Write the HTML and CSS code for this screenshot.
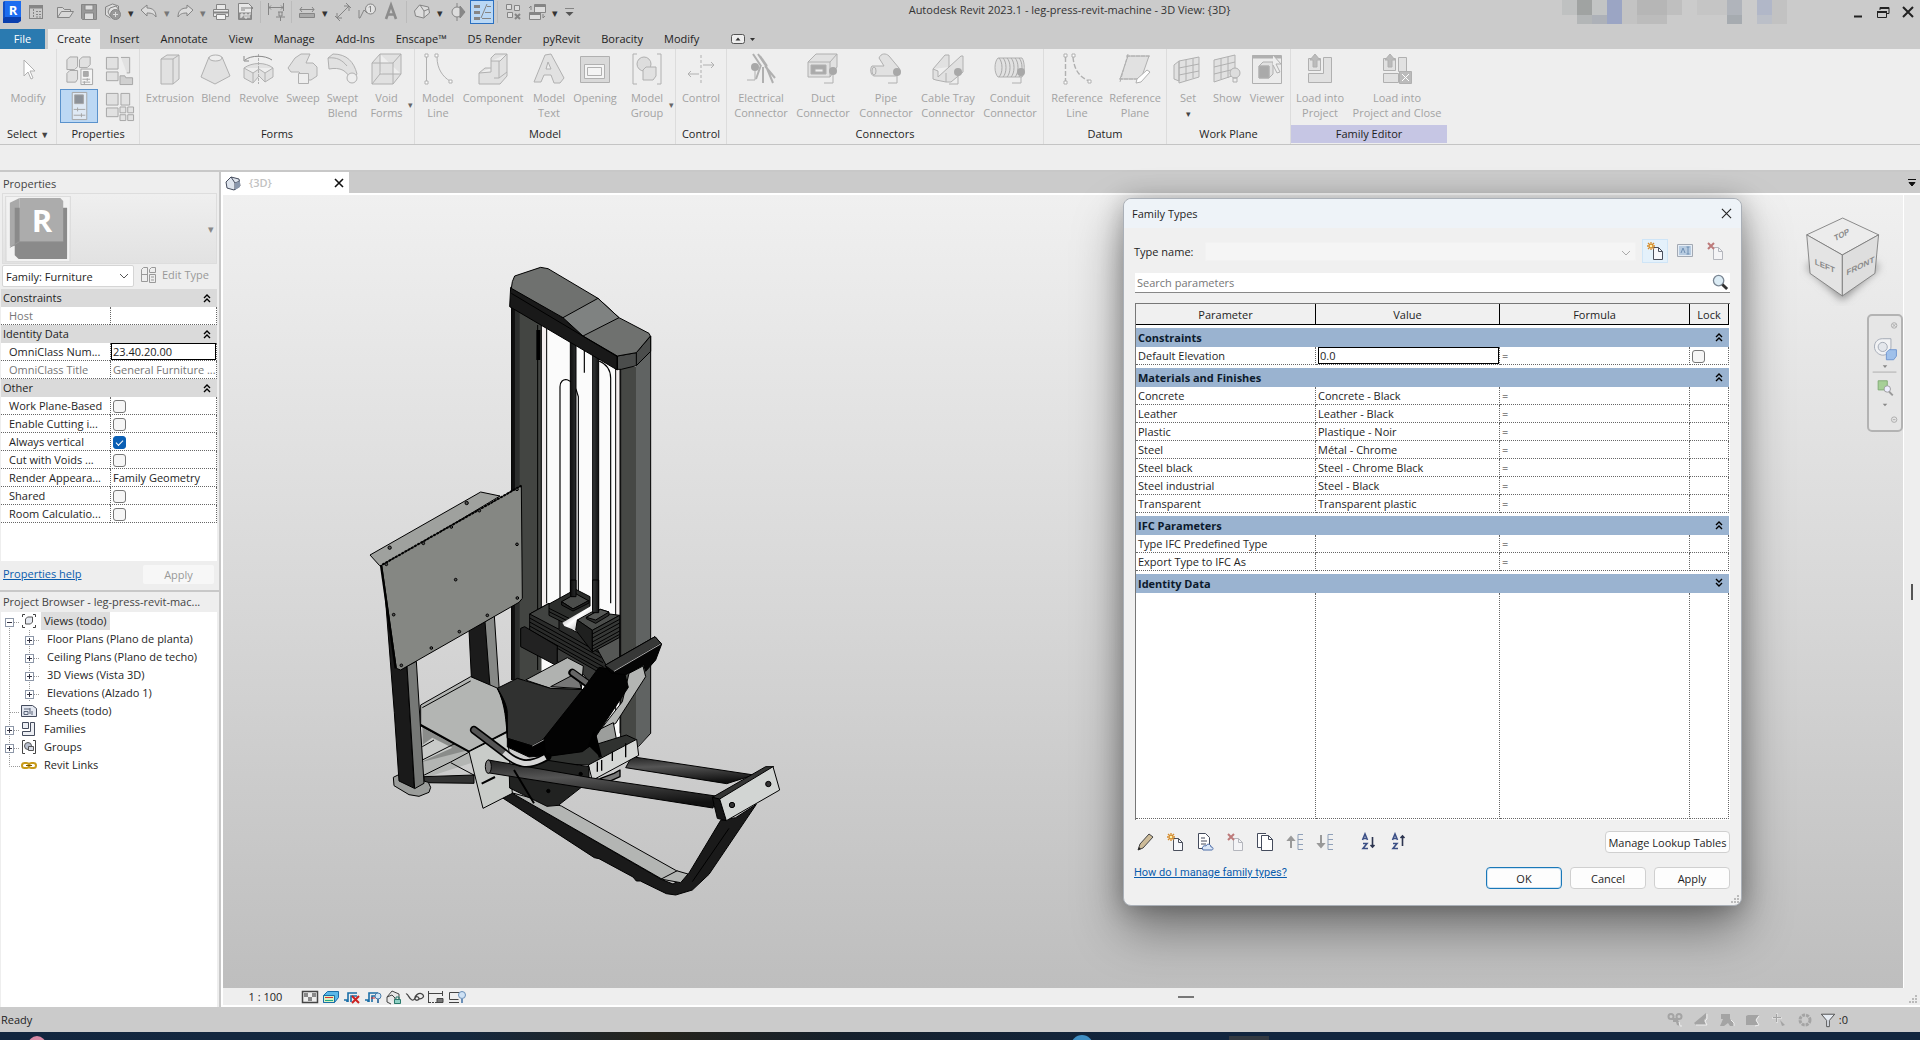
FILE: index.html
```html
<!DOCTYPE html>
<html lang="en">
<head>
<meta charset="utf-8">
<title>Autodesk Revit 2023.1 - leg-press-revit-machine</title>
<link rel="stylesheet" href="styles.css">
</head>
<body>
<svg class="defs" aria-hidden="true">
  <defs>
    <symbol id="t-plus" viewBox="0 0 20 18"><path class="dots" d="M9.500 0v18M14 10.500h6"/><rect x="5.500" y="6.500" width="8" height="8" fill="#fff" stroke="#8d97a8"/><path d="M7 10.500h5M9.500 8v5" stroke="#334"/></symbol>
    <symbol id="t-minus" viewBox="0 0 20 18"><path class="dots" d="M9.500 14v4M14 10.500h6"/><rect x="5.500" y="6.500" width="8" height="8" fill="#fff" stroke="#8d97a8"/><path d="M7 10.500h5" stroke="#334"/></symbol>
    <symbol id="t-tee" viewBox="0 0 20 18"><path class="dots" d="M9.500 0v18M10 10.500h10"/></symbol>
    <symbol id="t-end" viewBox="0 0 20 18"><path class="dots" d="M9.500 0v10.500h10.500"/></symbol>
    <symbol id="t-pass" viewBox="0 0 20 18"><path class="dots" d="M9.500 0v18"/></symbol>
    <symbol id="up" viewBox="0 0 8 10"><path d="M1 5l3-3 3 3M1 9l3-3 3 3" fill="none" stroke="#000" stroke-width="1.400"/></symbol>
    <symbol id="down" viewBox="0 0 8 10"><path d="M1 1l3 3 3-3M1 5l3 3 3-3" fill="none" stroke="#000" stroke-width="1.400"/></symbol>
    <symbol id="newdoc" viewBox="0 0 18 20"><path d="M7.500 6.500h5l4 4v8h-9z" fill="#f6f7fb" stroke="#4a4f5c"/><path d="M12.500 6.500v4h4" fill="none" stroke="#4a4f5c"/><path d="M5 1v8M1 5h8M2 2l6 6M8 2l-6 6" stroke="#d58b2a" stroke-width="1.300"/><circle cx="5" cy="5" r="1.300" fill="#fff3b0"/></symbol>
    <symbol id="deldoc" viewBox="0 0 18 20"><path d="M7.500 6.500h5l4 4v8h-9z" fill="#f4f4f6" stroke="#b4b6bd"/><path d="M12.500 6.500v4h4" fill="none" stroke="#b4b6bd"/><path d="M2 2l6 6M8 2l-6 6" stroke="#bd7a7a" stroke-width="2"/></symbol>
  </defs>
</svg>

<div class="app">
  <header class="titlebar">
    <nav class="qat" aria-label="Quick access">
      <button class="q" aria-label="Revit"><svg viewBox="0 0 24 24"><path d="M3 2l3-1h15v20l-3 2H3z" fill="#0a3fae" stroke="none"/><path d="M5 1h16v16H5z" fill="#1c6cf0" stroke="none"/><path d="M3 2l2-1v16l-2 2z" fill="#1250c4" stroke="none"/><text x="13" y="15" class="logo-r">R</text></svg></button>
      <button class="q" aria-label="Home"><svg viewBox="0 0 24 24"><rect x="5.500" y="5.500" width="13" height="13"/><path d="M5 7h14" stroke-width="3"/><path d="M9.500 9v9M12 11.500h5M12 14.500h5M12 17h5" stroke-dasharray="2 1"/></svg></button>
      <button class="q gap" aria-label="Open"><svg viewBox="0 0 24 24"><path d="M4.500 17.500v-10h5l2 2h6v2M4.500 17.500l4-6h12l-4 6z" fill="#d8d8d8"/></svg></button>
      <button class="q" aria-label="Save"><svg viewBox="0 0 24 24"><path d="M4.500 4.500h15v15h-14l-1-1z" fill="#999"/><path d="M8 5h8v5H8zM7.500 13h9v6.500h-9z" fill="#ddd"/></svg></button>
      <button class="q" aria-label="Sync"><svg viewBox="0 0 24 24"><path d="M4.500 7l7-3 6 2v4M4.500 7v8l5 3" fill="#ddd"/><path d="M7 12l2-4 6-2 3 4-2 6h-7z" fill="#e2e2e2"/><circle cx="14.500" cy="14.500" r="5" fill="#999"/><path d="M12 14.500h5M14.500 12v5" stroke="#ddd"/></svg></button>
      <span class="a">▾</span>
      <button class="q" aria-label="Undo"><svg viewBox="0 0 24 24"><path d="M4 10l6-5v3c6 0 9 3 9 9-2-3-4-4-9-4v3z" fill="#dcdcdc"/></svg></button>
      <span class="a dim">▾</span>
      <button class="q" aria-label="Redo"><svg viewBox="0 0 24 24"><path d="M20 10l-6-5v3c-6 0-9 3-9 9 2-3 4-4 9-4v3z" fill="#dcdcdc"/></svg></button>
      <span class="a dim">▾</span>
      <button class="q" aria-label="Print"><svg viewBox="0 0 24 24"><path d="M7.500 9V4.500h9V9M4.500 9.500h15v7h-15z" fill="#e8e8e8"/><path d="M5 12.500h14" stroke-width="2"/><path d="M7.500 14.500h9v5h-9z" fill="#f2f2f2"/></svg></button>
      <button class="q" aria-label="Export PDF"><svg viewBox="0 0 24 24"><path d="M5.500 3.500h10l3 3v13h-13z" fill="#e8e8e8"/><path d="M8 8h6M8 10h4"/><path d="M6 13h12v6H6z" fill="#999"/><path d="M8 18v-4h2v2H8M12 18v-4h2v4zM16 18v-4h2" stroke="#eee"/><path d="M14 8h6m-2-2l2 2-2 2"/></svg></button>
      <span class="s"></span>
      <button class="q" aria-label="Pin dimension"><svg viewBox="0 0 24 24"><path d="M4.500 3v12M19.500 3v8M5 7.500h14M7 5.500l-2 2 2 2M17 5.500l2 2-2 2M14 12h5M15 12v4h3v-4M12 17h9M16.500 17v4"/></svg></button>
      <span class="s"></span>
      <button class="q" aria-label="Measure"><svg viewBox="0 0 24 24"><path d="M4.500 13.500h15v4h-15z" fill="#aaa"/><path d="M5 9.500h14M7 7L5 9.500 7 12M17 7l2 2.500-2 2.500"/></svg></button>
      <span class="a">▾</span>
      <button class="q" aria-label="Aligned dimension"><svg viewBox="0 0 24 24"><path d="M6 18L18 6M6 13v5h5M13 6h5v5M4 16l5 5M15 3l5 5"/></svg></button>
      <button class="q" aria-label="Tag"><svg viewBox="0 0 24 24"><circle cx="15.500" cy="9" r="5" fill="#e2e2e2"/><path d="M15.500 6v6M14 7.500l1.500-1.500M12 13l-3-3-4 8H4M4 10v8"/></svg></button>
      <button class="q" aria-label="Text"><svg viewBox="0 0 24 24"><path d="M7 19l5-14 5 14M8.500 14.500h7" stroke-width="2.600" stroke="#8c8c8c"/></svg></button>
      <span class="s"></span>
      <button class="q" aria-label="3D view"><svg viewBox="0 0 24 24"><path d="M4.500 11l5-6 9 2 1 6-6 5-8-2z" fill="#ddd"/><path d="M10 5l4 6v7M14 11l5-2" /></svg></button>
      <span class="a">▾</span>
      <button class="q" aria-label="Section"><svg viewBox="0 0 24 24"><circle cx="11" cy="12" r="5" fill="#ddd"/><path d="M11 3v4M11 17v4"/><path d="M14 6l5 6-5 6z" fill="#888"/></svg></button>
      <button class="q on" aria-label="Thin lines"><svg viewBox="0 0 24 24"><path d="M4 6.500h6M4 12.500h6M4 18.500h6" stroke-width="3"/><path d="M11 18L17 4M17 6.500h4M15 12.500h6M12 18.500h9"/></svg></button>
      <span class="s"></span>
      <button class="q" aria-label="Close inactive"><svg viewBox="0 0 24 24"><path d="M5.500 4.500h5v5h-5zM13.500 5.500h5v5h-5zM6.500 12.500h5v5h-5z" fill="#ddd"/><path d="M14 14l5 5M19 14l-5 5" stroke-width="2"/></svg></button>
      <button class="q" aria-label="Switch windows"><svg viewBox="0 0 24 24"><path d="M9.500 4.500h11v8h-11zM4.500 12.500h11v7h-11z" fill="#ddd"/><path d="M10 6h10M5 14h10" stroke-width="2"/><path d="M6 10V6l-2 2M18 14v4l2-2"/></svg></button>
      <span class="a">▾</span>
      <button class="q small" aria-label="Customize"><svg viewBox="0 0 16 24"><path d="M4 8.500h9"/><path d="M4.500 12l4 4 4-4z" fill="#555" stroke="none"/></svg></button>
    </nav>
    <h1 class="app-title">Autodesk Revit 2023.1 - leg-press-revit-machine - 3D View: {3D}</h1>
    <svg class="account" viewBox="0 0 225 24" aria-hidden="true"><g stroke="none">
      <path d="M0 0h15v15H0z" fill="#bfc1c1"/><path d="M15 0h15v15H15z" fill="#a0a3a2"/><path d="M30 0h15v15H30z" fill="#c2c4c4"/><path d="M45 0h15v24H45z" fill="#9ba5c4"/><path d="M60 0h15v24H60z" fill="#c3c3c3"/><path d="M75 0h30v15H75z" fill="#b6b6b6"/><path d="M105 0h15v15h-15z" fill="#bfbfbf"/><path d="M15 15h15v9H15z" fill="#b3b6b7"/><path d="M30 15h15v9H30z" fill="#adb1b8"/><path d="M75 15h30v9H75z" fill="#bcbcbc"/><path d="M135 0h30v15h-30z" fill="#c5c5c5"/><path d="M165 0h15v15h-15z" fill="#b0b4bb"/><path d="M165 15h15v9h-15z" fill="#a6abb0"/><path d="M195 0h15v15h-15z" fill="#b1b7c8"/><path d="M195 15h15v9h-15z" fill="#bbbfc8"/><path d="M210 0h15v24h-15z" fill="#c2c2c2"/></g></svg>
    <div class="winctl">
      <button aria-label="Minimize"><svg viewBox="0 0 24 24"><path d="M8 16.500h8" stroke="#222" stroke-width="2"/></svg></button>
      <button aria-label="Restore"><svg viewBox="0 0 24 24"><path d="M9 10V7.500h9v6h-3M6.500 11.500h9v6h-9z" fill="none" stroke="#222"/><path d="M6 12h10M9 8h9" stroke="#222" stroke-width="2"/></svg></button>
      <button aria-label="Close"><svg viewBox="0 0 24 24"><path d="M7 7l10 10M17 7L7 17" stroke="#222" stroke-width="2"/></svg></button>
    </div>
  </header>

  <nav class="tabs" aria-label="Ribbon tabs">
    <a href="#file" class="file">File</a><a href="#create" class="cur">Create</a><a href="#insert">Insert</a><a href="#annotate">Annotate</a><a href="#view">View</a><a href="#manage">Manage</a><a href="#addins">Add-Ins</a><a href="#enscape">Enscape™</a><a href="#d5">D5 Render</a><a href="#pyrevit">pyRevit</a><a href="#boracity">Boracity</a><a href="#modify">Modify</a>
    <button class="collapse" aria-label="Minimize ribbon"><svg viewBox="0 0 28 12"><rect x="1.500" y="1.500" width="13" height="9" rx="2" fill="#eee" stroke="#555"/><path d="M5.500 7.500l2.500-3 2.500 3zM20 5h5l-2.500 3z" fill="#333"/></svg></button>
  </nav>

  <div class="ribbon">
    <section class="panel p-select">
      <div class="tools"><button class="rb" disabled><svg viewBox="0 0 32 32"><path d="M12 7v16l4-4 3 7 2-1-3-7h5z" fill="#fff"/></svg>Modify</button></div>
      <h2>Select <span class="tri">▼</span></h2>
    </section>
    <section class="panel p-props">
      <div class="quad">
        <button aria-label="Family category"><svg viewBox="0 0 32 32"><path class="f" d="M3 5l3-3h8v10l-3 3H3zM16 5l3-3h8v8l-3 3h-8zM3 19l3-3h8v9l-2 3H3z"/><path d="M17.500 14.500h12v16h-12z" fill="#f4f4f4"/><path d="M20 17h5v5h-5z" fill="#aaa"/><path d="M19 25h8M19 28h8M24 24v3M21 27v3"/></svg></button>
        <button aria-label="Family types"><svg viewBox="0 0 32 32"><path class="f" d="M2.500 2.500h12v12h-12zM17.500 2.500h9v16h-3M2.500 17.500h12v9h-12z"/><path d="M16.500 21.500h5l1 2h7v7h-13z" fill="#d0d0d0"/></svg></button>
        <button class="on" aria-label="Properties"><svg viewBox="0 0 32 32"><path d="M8.500 1.500h15v28h-15z" fill="#dfe9f4"/><path d="M11 4h9v9h-9z" fill="#8d9299"/><path d="M10 19h12M10 25h12M14 17v4M18 23v4"/></svg></button>
        <button aria-label="Family parameters"><svg viewBox="0 0 32 32"><path class="f" d="M2.500 2.500h12v12h-12zM17.500 2.500h9v12h-9zM2.500 17.500h12v9h-12z"/><path d="M16.500 16.500h6v6h-6zM24.500 16.500h6v6h-6zM16.500 24.500h6v6h-6zM24.500 24.500h6v6h-6z" fill="#e2e2e2"/></svg></button>
      </div>
      <h2>Properties</h2>
    </section>
    <section class="panel p-forms">
      <div class="tools">
        <button class="rb" disabled><svg viewBox="0 0 32 32"><path class="f" d="M7 6l6-4h12v24l-6 5H7zM7 6h12v25M19 6l6-4"/></svg>Extrusion</button>
        <button class="rb" disabled><svg viewBox="0 0 32 32"><path class="f" d="M9 4L1 24l14 7 15-8L22 4z"/><ellipse cx="15.500" cy="5" rx="6.500" ry="3" fill="#eee"/></svg>Blend</button>
        <button class="rb" disabled><svg viewBox="0 0 32 32"><path class="f" d="M1 15c8-6 22-6 29 0v9l-8 5-6-6-6 7-9-5zM1 15l9 5 6-4 6 4 8-5M10 20v9M22 20v9"/><path d="M15.500 1v30" stroke-dasharray="3 1"/><path d="M2 7c6-5 20-5 27 0M1 3v5h5" stroke="#888"/></svg>Revolve</button>
        <button class="rb" disabled><svg viewBox="0 0 32 32"><path class="f" d="M8 5l6-4h9l-4 9h7l4 4v9l-6 4h-4l-8-8H4l-3-4z"/><path d="M11.500 20.500h10v10h-10z" fill="#eee"/></svg>Sweep</button>
        <button class="rb" disabled><svg viewBox="0 0 32 32"><path class="f" d="M1 5l5-4c14 0 21 8 24 20l-6 8C21 17 13 14 2 16zM1 5c9-1 14 2 19 8"/><circle cx="25" cy="25" r="5" fill="#eee"/></svg>Swept<br>Blend</button>
        <button class="rb more" disabled><svg viewBox="0 0 32 32"><path class="f" d="M1 10l8-9h21v20l-8 10H1zM1 10h21v21M22 10l8-9M9 1v20h21M9 21l-8 10"/></svg>Void<br>Forms</button>
      </div>
      <h2>Forms</h2>
    </section>
    <section class="panel p-model">
      <div class="tools">
        <button class="rb" disabled><svg viewBox="0 0 32 32"><path d="M4.500 4v24M15 4c0 12 6 20 13 24"/><path d="M3 1h3v3H3zM3 28h3v3H3zM13 1h3v3h-3zM27 27h3v3h-3z" fill="#fff"/></svg>Model<br>Line</button>
        <button class="rb" disabled><svg viewBox="0 0 32 32"><path class="f" d="M2 20l12-1V5l4-4h12v22l-7 8H2zM2 20l6-5h6M22 8v17l-5 0M14 8h9l7-7M22 25l8-6"/></svg>Component</button>
        <button class="rb" disabled><svg viewBox="0 0 32 32"><path class="f" d="M1 29L12 2l6-1 13 24-4 5h-6l-3-8h-7l-3 7zM13 16h5l-3-7z"/></svg>Model<br>Text</button>
        <button class="rb" disabled><svg viewBox="0 0 32 32"><path d="M1.500 3.500h29v26h-29z" fill="#d9d9d9"/><path d="M5.500 11.500h20v14h-20z" fill="#f4f4f4"/><path d="M8.500 14.500h14v8h-14z"/></svg>Opening</button>
        <button class="rb more" disabled><svg viewBox="0 0 32 32"><path d="M6 1H2v30h4M26 1h4v30h-4"/><circle cx="13" cy="11" r="7" fill="#ddd"/><path class="f" d="M12 17l3-3h10v9l-3 4H12z"/></svg>Model<br>Group</button>
      </div>
      <h2>Model</h2>
    </section>
    <section class="panel p-control">
      <div class="tools"><button class="rb" disabled><svg viewBox="0 0 32 32"><path d="M16 2v28" stroke-dasharray="3 2"/><path d="M18 12h11M26 9l3 3-3 3M14 21H3M6 18l-3 3 3 3" /></svg>Control</button></div>
      <h2>Control</h2>
    </section>
    <section class="panel p-conn">
      <div class="tools">
        <button class="rb" disabled><svg viewBox="0 0 32 32"><path d="M8 1l8 12M13 1l8 12M15 3l7 10M21 13l7 17M18 14v16M16 12l-5 14M20 13l10 12" stroke-width="2"/><circle class="n" cx="10" cy="14" r="4"/><path d="M10 18v9H2"/></svg>Electrical<br>Connector</button>
        <button class="rb" disabled><svg viewBox="0 0 32 32"><path class="f" d="M1 9l8-8h21v13l-7 10H1zM1 9h22v15M23 9l7-8"/><path d="M4 12h15v9H4z" fill="#aaa"/><path d="M8 16h8v3H8z" fill="#eee"/><circle class="n" cx="26" cy="18" r="4"/><path d="M26 22v8h-9"/></svg>Duct<br>Connector</button>
        <button class="rb" disabled><svg viewBox="0 0 32 32"><path class="f" d="M2 13h12L9 5c2-5 7-5 10-2l10 12c2 4 0 8-4 8H4c-4-1-4-8-2-10z"/><ellipse cx="4" cy="18" rx="2" ry="4"/><circle class="n" cx="27" cy="19" r="4"/><path d="M27 23v7h-9"/></svg>Pipe<br>Connector</button>
        <button class="rb" disabled><svg viewBox="0 0 32 32"><path class="f" d="M1 16L13 2h4v12L29 3h2v16L19 29h-5L4 27l-3-1zM1 16l5 2v6l11-10M14 20v9"/><circle class="n" cx="26" cy="19" r="4"/><path d="M26 23v8h-9"/></svg>Cable Tray<br>Connector</button>
        <button class="rb" disabled><svg viewBox="0 0 32 32"><path class="f" d="M4 5h24c3 4 3 15 0 19H4C0 20 0 9 4 5z"/><path d="M5 5c4 4 4 15 0 19M9 5c4 4 4 15 0 19M13 5c4 4 4 15 0 19M17 5c4 4 4 15 0 19M21 5c4 4 4 15 0 19M25 5c4 4 4 15 0 19" stroke="#aaa"/><circle class="n" cx="27" cy="19" r="4"/><path d="M27 23v7h-9"/></svg>Conduit<br>Connector</button>
      </div>
      <h2>Connectors</h2>
    </section>
    <section class="panel p-datum">
      <div class="tools">
        <button class="rb" disabled><svg viewBox="0 0 32 32"><path d="M4.500 4v24M12 4c1 12 6 20 16 24" stroke-dasharray="5 2" stroke-width="1.400"/><path d="M3 1h3v3H3zM3 28h3v3H3zM11 1h3v3h-3zM27 27h3v3h-3z" fill="#fff"/></svg>Reference<br>Line</button>
        <button class="rb" disabled><svg viewBox="0 0 32 32"><path class="f" d="M9 3h21l-8 23H1z"/><path d="M7 3h24M0 26h18M9 1L1 29" stroke-dasharray="4 1"/><path d="M18 26L28 17l3 2-9 10-5 1z" fill="#fff"/></svg>Reference<br>Plane</button>
      </div>
      <h2>Datum</h2>
    </section>
    <section class="panel p-plane">
      <div class="tools">
        <button class="rb" disabled><svg viewBox="0 0 32 32"><path class="f" d="M2 12l5-4v20l-5-2zM7 8l20-4v20L7 30zM7 15l20-4M7 22l20-4M14 7v21M21 5v20"/></svg>Set<br><span class="tri">▾</span></button>
        <button class="rb" disabled><svg viewBox="0 0 32 32"><path class="f" d="M3 7l21-5v20L3 29zM3 14l21-5M3 21l21-5M10 5v21M17 4v21"/><circle cx="24" cy="20" r="5" fill="#ddd"/><path d="M22 25h4v4h-4z"/></svg>Show</button>
        <button class="rb" disabled><svg viewBox="0 0 32 32"><path d="M1.500 2.500h29v28h-29z" fill="#ececec"/><path d="M1 4h29" stroke-width="3"/><path class="f" d="M8 13l4-4h10v12l-4 4H8zM8 13h10v12"/><path d="M8 13h10v12H8z" fill="#aaa"/><path d="M22 2l8 9-5 0 4 8-3 1-4-8"  fill="#eee"/></svg>Viewer</button>
      </div>
      <h2>Work Plane</h2>
    </section>
    <section class="panel p-family">
      <div class="tools">
        <button class="rb" disabled><svg viewBox="0 0 32 32"><path class="f" d="M4.500 5.500h12v12h-12zM19.500 4.500h8v25h-23v-9h15z"/><path d="M9 14V7H6l5-6 5 6h-3v7z" fill="#bbb"/></svg>Load into<br>Project</button>
        <button class="rb" disabled><svg viewBox="0 0 32 32"><path class="f" d="M2.500 5.500h12v12h-12zM17.500 4.500h8v14h-8zM2.500 20.500h15v9h-15z"/><path d="M7 14V7H4l5-6 5 6h-3v7z" fill="#bbb"/><path d="M18.500 18.500h12v12h-12z" fill="#bbb"/><path d="M21 21l7 7M28 21l-7 7" stroke="#fff"/></svg>Load into<br>Project and Close</button>
      </div>
      <h2>Family Editor</h2>
    </section>
  </div>
  <div class="options"></div>

  <main class="work">
    <aside class="side">
      <section class="props">
        <h2>Properties</h2>
        <div class="typesel">
          <svg viewBox="0 0 64 66"><path d="M0 0h64v66H0z" fill="#f2f2f2"/><path d="M3 6l10-5v49l-10 1z" fill="#a9a9a9"/><path d="M8 11h54v53H12l-4-4z" fill="#8a8a8a"/><path d="M13 1h42l3 3v42H13z" fill="#acacac"/><path d="M3 52l10-6h45" stroke="#999" fill="none"/><text x="36" y="36" class="big-r">R</text></svg>
          <button aria-label="Change type">▾</button>
        </div>
        <div class="filter">
          <div class="selwrap"><select aria-label="Category"><option>Family: Furniture</option></select><svg viewBox="0 0 10 6"><path d="M1 1l4 4 4-4" fill="none" stroke="#555"/></svg></div>
          <button class="edit" disabled><svg viewBox="0 0 18 18"><path d="M1.500 3.500l2-2h4v14h-6zM9.500 3.500l2-2h4v5h-6zM1.500 8.500h6M9.500 8.500h6v8h-6zM11 11h3M11 14h3" fill="none" stroke="#999"/></svg>Edit Type</button>
        </div>
        <div class="ptable">
          <table>
            <colgroup><col class="pk"><col></colgroup>
            <tbody>
            <tr class="grp"><th colspan="2">Constraints<svg><use href="#up"/></svg></th></tr>
            <tr class="ro"><td>Host</td><td></td></tr>
            <tr class="grp"><th colspan="2">Identity Data<svg><use href="#up"/></svg></th></tr>
            <tr><td><label for="omni">OmniClass Num...</label></td><td class="fld"><input id="omni" type="text" value="23.40.20.00"></td></tr>
            <tr class="ro"><td>OmniClass Title</td><td>General Furniture ...</td></tr>
            <tr class="grp"><th colspan="2">Other<svg><use href="#up"/></svg></th></tr>
            <tr><td><label for="c1">Work Plane-Based</label></td><td><input id="c1" type="checkbox"></td></tr>
            <tr><td><label for="c2">Enable Cutting i...</label></td><td><input id="c2" type="checkbox"></td></tr>
            <tr><td><label for="c3">Always vertical</label></td><td><input id="c3" type="checkbox" checked></td></tr>
            <tr><td><label for="c4">Cut with Voids ...</label></td><td><input id="c4" type="checkbox"></td></tr>
            <tr><td>Render Appeara...</td><td>Family Geometry</td></tr>
            <tr><td><label for="c5">Shared</label></td><td><input id="c5" type="checkbox"></td></tr>
            <tr><td><label for="c6">Room Calculatio...</label></td><td><input id="c6" type="checkbox"></td></tr>
            </tbody>
          </table>
        </div>
        <div class="pfoot"><a href="#help">Properties help</a><button disabled>Apply</button></div>
      </section>
      <section class="browser">
        <h2>Project Browser - leg-press-revit-mac...</h2>
        <ul class="tree">
          <li><svg><use href="#t-minus"/></svg><svg class="ic" viewBox="0 0 16 16"><path d="M4 1.500H1.500V4M12 1.500h2.500V4M4 14.500H1.500V12M12 14.500h2.500V12" fill="none" stroke="#444"/><path d="M4.500 6l2-2h5v5l-2 2h-5z" fill="#e8ebf2" stroke="#555"/></svg><span class="sel">Views (todo)</span></li>
          <li><svg><use href="#t-pass"/></svg><svg><use href="#t-plus"/></svg><span class="kid">Floor Plans (Plano de planta)</span></li>
          <li><svg><use href="#t-pass"/></svg><svg><use href="#t-plus"/></svg><span class="kid">Ceiling Plans (Plano de techo)</span></li>
          <li><svg><use href="#t-pass"/></svg><svg><use href="#t-plus"/></svg><span class="kid">3D Views (Vista 3D)</span></li>
          <li><svg><use href="#t-pass"/></svg><svg><use href="#t-plus"/></svg><span class="kid">Elevations (Alzado 1)</span></li>
          <li><svg><use href="#t-tee"/></svg><svg class="ic" viewBox="0 0 16 16"><path d="M.5 2.500h11l4 3v8H.5z" fill="#e3e7f0" stroke="#444b5c"/><path d="M3 6h6M3 8.500h4v3H3zM9 5v6M11 8v4" fill="none" stroke="#5a6478"/></svg><span>Sheets (todo)</span></li>
          <li><svg><use href="#t-plus"/></svg><svg class="ic" viewBox="0 0 16 16"><path d="M1.500 1.500h6v6h-6zM9.500 1.500h4v13h-12v-4h8z" fill="#eceef3" stroke="#444b5c"/></svg><span>Families</span></li>
          <li><svg><use href="#t-plus"/></svg><svg class="ic" viewBox="0 0 16 16"><path d="M4 1.500H1.500v13H4M12 1.500h2.500v13H12" fill="none" stroke="#444"/><circle cx="7" cy="7" r="3.500" fill="#b9c0cf" stroke="#555"/><path d="M7.500 7.500h5v4h-5z" fill="#d8dce6" stroke="#555"/></svg><span>Groups</span></li>
          <li><svg><use href="#t-end"/></svg><svg class="ic" viewBox="0 0 16 16"><rect x="1" y="6" width="7" height="5" rx="2.500" fill="none" stroke="#c89a18" stroke-width="2"/><rect x="8" y="6" width="7" height="5" rx="2.500" fill="none" stroke="#c89a18" stroke-width="2"/><path d="M5 8.500h6" stroke="#7a5a08"/></svg><span>Revit Links</span></li>
        </ul>
      </section>
    </aside>

    <section class="view">
      <div class="viewtabs">
        <div class="vtab"><svg viewBox="0 0 16 16"><path d="M1 7l5-5 8 2 1 7-6 4-7-2z" fill="#dfe5ee" stroke="#444b5c"/><path d="M1 7l5-5 4 6v7M10 8l5-2" fill="none" stroke="#444b5c"/><path d="M10 8l5-2v6l-5 3z" fill="#8a97ac"/></svg><span>{3D}</span><button aria-label="Close view"><svg viewBox="0 0 12 12"><path d="M2 2l8 8M10 2l-8 8" stroke="#111" stroke-width="1.600"/></svg></button></div>
        <button class="vmore" aria-label="Tab list"><svg viewBox="0 0 10 10"><path d="M1 1.500h8M2 4.500l3 3.500 3-3.500z" stroke="#111" fill="#111"/></svg></button>
      </div>
      <div class="viewbody">
        <div class="canvas">
          <svg class="machine" viewBox="0 0 1320 1980" role="img" aria-label="Leg press machine">
            <defs>
              <linearGradient id="tube" x1="0" y1="0" x2="0.150" y2="1"><stop offset="0" stop-color="#222"/><stop offset=".4" stop-color="#555"/><stop offset="1" stop-color="#111"/></linearGradient>
              <linearGradient id="chrome" x1="0" y1="0" x2="1" y2="1"><stop offset="0" stop-color="#777"/><stop offset=".5" stop-color="#fff"/><stop offset="1" stop-color="#888"/></linearGradient>
              <linearGradient id="rod"><stop offset="0" stop-color="#111"/><stop offset=".6" stop-color="#5a6062"/><stop offset="1" stop-color="#111"/></linearGradient>
            </defs>
            <g stroke="#000" stroke-width="3" stroke-linejoin="round">
              <path d="M457 170L548 220V1290H457z" fill="#434542" stroke="none"/>
              <path d="M457 175h11V1290h-11z" fill="#101010" stroke="none"/><path d="M468 175h14V1290h-14z" fill="#2c2e2d" stroke="none"/>
              <path d="M548 222L790 358V1470H548z" fill="#fbfbfb" stroke="none"/>
              <path d="M548 225h16V1100h-16zM770 350h15V1200h-15z" fill="#f3eeee" stroke="none"/>
              <path d="M458 172V1290M536 225V1260M547 225V1100M563 235V1060M770 350V1420M783 355V1450" fill="none"/>
              <path d="M538 240v90" stroke-width="12"/>
              <path d="M603 410V1060M603 410C603 380 642 375 658 440V1080M755 385V1060M755 385C755 360 742 342 720 333M676 300v68" fill="none" stroke-width="3.500"/>
              <path d="M634 270h17V1050h-17zM701 310h18V1080h-18z" fill="url(#rod)"/>
              <path d="M785 350h46V1480h-46z" fill="#464845" stroke="none"/>
              <path d="M831 340l44-42V1450l-37 38h-7z" fill="#606362" stroke="none"/>
              <path d="M785 355V1470M875 258V1450l-37 40" fill="none"/>
              <path d="M455 112L612 203l60 55 103 60v42L452 170z" fill="#191919"/>
              <path d="M775 318l57-10 43-50v46l-43 43-45 11h-12z" fill="#4b4d4c"/>
              <path d="M467 78l78-26 22 4 150 89 63 58 90 47 4 8-42 50-57 10-103-60-60-55-155-88 3-20z" fill="#6f716f"/>
              <path d="M612 203l105-58 63 58-108 55z" fill="#7f8281"/>
              <path d="M775 318v40M457 130l318 190M832 308v38" fill="none"/>
              <path d="M33 915L365 726l58 12L75 947H62z" fill="#9fa19e"/>
            </g>
            <g transform="translate(0 990)" stroke="#000" stroke-width="3" stroke-linejoin="round">
              <path d="M330 150l50-25 15 200-58-35z" fill="#1b1b1b"/><path d="M378 125l28-17 15 225-28-13z" fill="#868886"/>
              <path d="M190 545l130-70 60 60-185 60z" fill="#b3b5b3" stroke="none"/><path d="M190 440l140 70-138 35z" fill="#8a8c8a" stroke="none"/>
              <path d="M190 495l30-22 60 30-88 40z" fill="#c9cbc9" stroke="none"/>
              <path d="M195 590l150-5v25l-150-2z" fill="#333"/><path d="M190 500l35-20M190 540l95-48M275 548l75 40M190 588l85-42 60-32" fill="none"/>
              <path d="M103 592l20-10 85 25 7 15-5 15-30 12-30-5-45-27z" fill="#9b9d9b"/>
              <path d="M75 0l37 265 32-5 22 365-46-22-14-205z" fill="#1a1a1a"/><path d="M144 258l28-14 23 366-28 16z" fill="#767876"/>
              <path d="M185 375l150-85 105 45 5 120-115 60-145-78z" fill="#b3b5b3"/><path d="M185 435l145 80 115-60" fill="none" stroke-width="6"/><path d="M190 383l145-80" fill="none"/>
              <path d="M425 650l32-12 450 260 35 14 45-28 98-163 45-8 62-40-142 210-50 47-50 15-28-4-78-38-12 0-10-12-102-55-14-3z" fill="#1a1a1a"/>
              <path d="M457 638l150 40 345 194 35 10-22 26-55-10z" fill="#b3b5b3"/><path d="M905 898l50-26M1000 905l110-160" fill="none"/>
              <path d="M818 530l367 55-82 26-303-48z" fill="url(#tube)"/>
              <path d="M700 215l82-45v70l-42 26z" fill="#555755"/>
              <path d="M512 102l58-32 48 24 22 56 60 30 45 82-28 20-205-122z" fill="#2a2b2a"/>
              <path d="M512 102l58-32 30 16v62z" fill="#414341"/>
              <path d="M512 114l215 119M512 126l220 122M512 138l222 123M512 150l215 120M600 150l120 68" fill="none"/>
              <path d="M570 72l80-44 43 22v30l-58 38-17 12-48-24z" fill="#2c2e2c"/><path d="M570 85l60 30M570 95l60 30" fill="none"/>
              <path d="M608 65l42-24 40 22-48 24z" fill="#4b4d4b"/><path d="M608 65v10l34 18 48-24v-8l-48 26z" fill="#1f201f"/>
              <path d="M610 128l86-50v25l-30 20-20 27-30-12z" fill="url(#chrome)" stroke="none"/>
              <path d="M655 120l45-25 82 11-82 45z" fill="#4b4d4b"/><path d="M655 120l45 31v64l-50-65z" fill="#1f201f"/>
              <path d="M700 151l82-45v66l-82 44z" fill="#363836"/><path d="M700 162l82-44M700 174l82-45M700 186l82-45M700 198l82-45M700 208l82-45" fill="none"/>
              <path d="M682 112l42-24 26 8v10l-40 24-28-14z" fill="#2d2e2d"/><path d="M682 112l42-24 26 8-40 24z" fill="#565856"/>
              <path d="M635 0h16v50h-16zM701 0h18v98h-18z" fill="url(#rod)"/>
              <path d="M485 145l12-5 98 58v60l-110-58z" fill="#222"/>
              <path d="M595 205l130 75-20 50-30-45-80-40z" fill="#3a3b3a"/>
              <path d="M500 300l125-67 48 25-6 70-90-2z" fill="#b0b2b0"/><path d="M575 320l80-42 12 48z" fill="#777"/>
              <path d="M640 278l50 36" stroke-width="24" stroke-linecap="round"/><path d="M642 278l46 33" stroke="#666" stroke-width="15" stroke-linecap="round"/>
              <path d="M720 455l70-90 20-85 42-22 8 32-90 140z" fill="#b3b5b3"/><path d="M708 455l55-27 14 75-54 28z" fill="#9c9e9c"/>
              <path d="M560 530l130-30 112-35 32 15-144 75-130-5z" fill="#303230"/><path d="M688 555l145-77 6 48-139 75z" fill="#d5d7d5"/><path d="M765 580l18-10v20l-40 18-20-12zM760 515v28M800 490v42M728 540v32M715 545v30" fill="#777" stroke-width="4"/>
              <path d="M330 515l115-58 15 183-88 45z" fill="#c9ccc9"/>
              <path d="M450 555l110-15 130 20v44l-92 72-34 3-112-55z" fill="#212221"/>
              <path d="M388 540l312 54 370 54-8 36-372-58-305-48z" fill="url(#tube)"/><path d="M368 611l40-20M465 570l60 100" fill="none" stroke-width="6"/>
              <ellipse cx="388" cy="560" rx="9" ry="20" fill="#777"/>
              <path d="M415 325l60-30 100 30 98 4-108 142-45 27-75-23c-4-50-5-100-30-150z" fill="#303130"/>
              <path d="M415 325c25 45 28 90 30 150l75 23 45-27 10 55-65 5-65-30v-100c0-20-10-45-30-76z" fill="#000"/><path d="M520 498l45-24" stroke="#999"/>
              <path d="M670 330l50-68 75 10 13 50-118 178-20 15-110 15-5-55z" fill="#030303"/><path d="M692 500l14-40 18 72" fill="#000" stroke-width="10"/>
              <path d="M738 256l150-86 20 22-18 48-30 34-6-20-54 30-44-5z" fill="#050505"/><path d="M738 256l150-86 18 20-142 85z" fill="#373837"/><path d="M765 274l140-82" stroke="#aaa"/>
              <path d="M345 450l90 68c40 35 70 45 130 12" fill="none" stroke-width="25" stroke-linecap="round"/><path d="M345 450l90 68" stroke="#555" stroke-width="15" stroke-linecap="round"/><path d="M435 518c40 35 70 45 124 14" fill="none" stroke="#d5d5d5" stroke-width="15"/>
              <path d="M1060 652l160-92h24l-162 100z" fill="#343534"/><path d="M1060 652l22 5 20 65-27-7z" fill="#151515"/><path d="M1082 657l160-97 20 70-160 92z" fill="#d2d5d3"/>
              <circle cx="1119" cy="675" r="8" fill="#333"/><circle cx="1228" cy="612" r="8" fill="#333"/><circle cx="568" cy="633" r="5"/><circle cx="665" cy="582" r="5"/>
            </g>
            <g stroke="#000" stroke-width="3" stroke-linejoin="round">
              <path d="M68 945L487 707l3 338-10 12-355 203-13-5z" fill="#858783"/><path d="M66 945l44 310" stroke-width="7"/><path d="M70 944L487 707" stroke-dasharray="8 3" stroke-width="6"/>
              <g fill="#555"><circle cx="82" cy="943" r="4"/><circle cx="193" cy="880" r="4"/><circle cx="277" cy="831" r="4"/><circle cx="361" cy="782" r="4"/><circle cx="474" cy="718" r="4"/><circle cx="474" cy="883" r="4"/><circle cx="290" cy="989" r="4"/><circle cx="475" cy="1044" r="4"/><circle cx="385" cy="1096" r="4"/><circle cx="301" cy="1145" r="4"/><circle cx="217" cy="1194" r="4"/><circle cx="127" cy="1246" r="4"/><circle cx="104" cy="1094" r="4"/><circle cx="92" cy="893" r="5"/><circle cx="323" cy="759" r="5"/></g>
            </g>
          </svg>
          <svg class="cube" viewBox="180 100 260 280" role="img" aria-label="View cube">
            <defs><filter id="soft"><feGaussianBlur stdDeviation="12"/></filter></defs>
            <path d="M200 260l108-60 112 60-112 100z" fill="#8c8c8c" filter="url(#soft)"/>
            <g stroke="#777" stroke-width="2.500"><path d="M202 165l107-50 107 50-108 60z" fill="#ececec"/><path d="M202 165l106 60v122l-96-67z" fill="#e4e4e4"/><path d="M416 165l-108 60v122l97-67z" fill="#dedede"/></g>
            <text class="face" transform="translate(306 164) rotate(-27) skewX(-15)" x="0" y="9">TOP</text>
            <text class="face" transform="translate(256 257) skewY(24)" x="0" y="9">LEFT</text>
            <text class="face" transform="translate(362 257) skewY(-26)" x="0" y="9">FRONT</text>
          </svg>
          <div class="navbar">
            <svg viewBox="0 0 35 117"><g fill="none" stroke="#aaa"><circle cx="27.500" cy="6.500" r="3"/><path d="M26 5l3 3M29 5l-3 3M4 57.500h26"/><circle cx="27.500" cy="109.500" r="3"/><path d="M26 109.500h3"/></g><path d="M6 30c0-6 4-9 9-9h9v9c0 6-5 9-9 9s-9-4-9-9z" fill="#f1f2f4" stroke="#a0a6b2"/><circle cx="15" cy="30" r="5" fill="#e4e7ec" stroke="#a0a6b2"/><path d="M19 36l3-3h8v7l-3 4h-8z" fill="#9fc0ea" stroke="#6d94cf"/><path d="M15 50h5l-2.500 3zM15 92h5l-2.500 3z" fill="#888"/><path d="M10 67h10v10H10z" fill="#a6cf97" stroke="#7fa873"/><circle cx="20" cy="76" r="3.500" fill="#eef" stroke="#999"/><path d="M22 79l4 4" stroke="#999" stroke-width="2"/></svg>
          </div>
        </div>
        <div class="vgrip"></div>
      </div>
      <div class="viewctl">
        <button class="scale">1 : 100</button>
        <button aria-label="Detail level"><svg viewBox="0 0 20 16"><path d="M2.500 2.500h15v11h-15z" fill="#eee" stroke="#444" stroke-width="1.500"/><path d="M4 4h4v4H4zM12 4h4v4h-4zM8 8h4v4H8z" fill="#888"/></svg></button>
        <button aria-label="Visual style"><svg viewBox="0 0 20 16"><path d="M2.500 6.500l4-4h11v6l-4 5h-11z" fill="#5bb8e8" stroke="#1b6fa8"/><path d="M2.500 6.500h11v7h-11z" fill="#d9f2c0" stroke="#1b6fa8"/><path d="M4 8.500h8" stroke="#d33"/><path d="M4 11.500h8" stroke="#2a8"/></svg></button>
        <button aria-label="Crop view off"><svg viewBox="0 0 20 16"><path d="M2 11h3v2M6 13V4h9M9 13V7h6" fill="none" stroke="#1b6fa8" stroke-width="1.600"/><path d="M10 7l7 7M17 7l-7 7" stroke="#c22" stroke-width="2"/></svg></button>
        <button aria-label="Show crop region"><svg viewBox="0 0 20 16"><path d="M2 11h3v2M6 13V4h9M9 13V7h4" fill="none" stroke="#1b6fa8" stroke-width="1.600"/><path d="M8 9h4" stroke="#c22"/><circle cx="15" cy="7" r="3" fill="#cfe6f7" stroke="#4a7ba8"/><path d="M15 10v4" stroke="#4a7ba8" stroke-width="2"/></svg></button>
        <button aria-label="Lock 3D view"><svg viewBox="0 0 20 16"><path d="M3 8l5-6 7 3v5M3 8v5l4 2M3 8l5-2 3 3v6" fill="#e6e6e6" stroke="#444"/><path d="M10.500 10.500h6v4h-6z" fill="#8fd0c4" stroke="#2b7a6d"/><path d="M12 10V8h3v2" fill="none" stroke="#2b7a6d"/></svg></button>
        <button aria-label="Temporary hide"><svg viewBox="0 0 20 16"><path d="M1 5c2-1 3 5 6 6s3-5 6-3-2 5-3 2 4-7 7-5 1 5-3 5" fill="none" stroke="#444" stroke-width="1.300"/></svg></button>
        <button aria-label="Reveal constraints"><svg viewBox="0 0 20 16"><path d="M2.500 2v12M3 4.500h13M16.500 2v5" fill="none" stroke="#444"/><path d="M3 13.500h8" stroke="#444" stroke-dasharray="2 1"/><path d="M11 9.500h6v4h-6z" fill="#777" stroke="#444"/></svg></button>
        <button aria-label="Worksharing display"><svg viewBox="0 0 20 16"><path d="M2.500 3.500h10M2.500 3.500v7h9M2 13.500h10" fill="none" stroke="#444"/><circle cx="15" cy="6" r="3.500" fill="#cfe2f5" stroke="#6a8fb8"/><path d="M15 10v4" stroke="#6a8fb8" stroke-width="2"/></svg></button>
        <span class="hgrip"></span>
        <svg class="sizer" viewBox="0 0 9 9"><path d="M6 0h2v2H6zM3 3h2v2H3zM6 3h2v2H6zM0 6h2v2H0zM3 6h2v2H3zM6 6h2v2H6z" fill="#bbb"/></svg>
      </div>

      <form class="dialog" role="dialog" aria-labelledby="dt">
        <div class="dhead"><h2 id="dt">Family Types</h2><button type="button" aria-label="Close dialog"><svg viewBox="0 0 12 12"><path d="M1 1l10 10M11 1L1 11" stroke="#222" stroke-width="1.200"/></svg></button></div>
        <div class="dtype">
          <label for="tn">Type name:</label>
          <div class="selwrap"><select id="tn" disabled><option></option></select><svg viewBox="0 0 10 6"><path d="M1 1l4 4 4-4" fill="none" stroke="#aaa"/></svg></div>
          <button type="button" class="on" aria-label="New type"><svg viewBox="0 0 18 20"><use href="#newdoc"/></svg></button>
          <button type="button" aria-label="Rename type"><svg viewBox="0 0 18 20"><path d="M1.500 3.500h15v12h-15z" fill="#e6edf5" stroke="#a3a9b3"/><path d="M3 5h12v9H3z" fill="#b7cbe0"/><path d="M5 12l2-5 2 5M12 6v7M10.500 6h3M10.500 13h3" fill="none" stroke="#6f8fb3"/></svg></button>
          <button type="button" aria-label="Delete type"><svg viewBox="0 0 18 20"><use href="#deldoc"/></svg></button>
        </div>
        <div class="dsearch"><input type="text" aria-label="Search parameters" placeholder="Search parameters"><svg viewBox="0 0 18 18"><circle cx="7" cy="7" r="5.500" fill="#dcecf5" stroke="#7b8794" stroke-width="1.400"/><path d="M11 11l5 5" stroke="#333" stroke-width="3"/></svg></div>
        <div class="dtable">
          <table>
            <colgroup><col class="c1"><col class="c2"><col class="c3"><col class="c4"></colgroup>
            <thead><tr><th>Parameter</th><th>Value</th><th>Formula</th><th>Lock</th></tr></thead>
            <tbody>
            <tr class="grp"><th colspan="4">Constraints<svg><use href="#up"/></svg></th></tr>
            <tr><td><label for="de">Default Elevation</label></td><td class="fld"><input id="de" type="text" value="0.0"></td><td>=</td><td><input type="checkbox" aria-label="Lock Default Elevation"></td></tr>
            <tr class="grp"><th colspan="4">Materials and Finishes<svg><use href="#up"/></svg></th></tr>
            <tr><td>Concrete</td><td>Concrete - Black</td><td>=</td><td></td></tr>
            <tr><td>Leather</td><td>Leather - Black</td><td>=</td><td></td></tr>
            <tr><td>Plastic</td><td>Plastique - Noir</td><td>=</td><td></td></tr>
            <tr><td>Steel</td><td>Métal - Chrome</td><td>=</td><td></td></tr>
            <tr><td>Steel black</td><td>Steel - Chrome Black</td><td>=</td><td></td></tr>
            <tr><td>Steel industrial</td><td>Steel - Black</td><td>=</td><td></td></tr>
            <tr><td>Transparent</td><td>Transparent plastic</td><td>=</td><td></td></tr>
            <tr class="grp"><th colspan="4">IFC Parameters<svg><use href="#up"/></svg></th></tr>
            <tr><td>Type IFC Predefined Type</td><td></td><td>=</td><td></td></tr>
            <tr><td>Export Type to IFC As</td><td></td><td>=</td><td></td></tr>
            <tr class="grp"><th colspan="4">Identity Data<svg><use href="#down"/></svg></th></tr>
            <tr class="fill"><td></td><td></td><td></td><td></td></tr>
            </tbody>
          </table>
        </div>
        <div class="dtools">
          <button type="button" aria-label="Edit parameter"><svg viewBox="0 0 18 20"><path d="M2 18l2-6L13 2l4 3-10 11z" fill="#cdbb98" stroke="#444"/><path d="M2 18l1-3 2 2z" fill="#222"/></svg></button>
          <button type="button" aria-label="New parameter"><svg viewBox="0 0 18 20"><use href="#newdoc"/></svg></button>
          <button type="button" aria-label="Shared parameter"><svg viewBox="0 0 18 20"><path d="M2.500 1.500h7l4 4v11h-11z" fill="#fff" stroke="#444b5c"/><path d="M5 6h4M5 9h6M5 12h5" stroke="#444b5c"/><path d="M7 18c-2-3 1-5 3-4 1-3 5-2 5 1 3 0 2 3 1 3z" fill="#dce8f8" stroke="#4b6ca8"/></svg></button>
          <button type="button" aria-label="Delete parameter"><svg viewBox="0 0 18 20"><use href="#deldoc"/></svg></button>
          <button type="button" aria-label="Duplicate"><svg viewBox="0 0 18 20"><path d="M10 1.500H1.500v14H5" fill="#fff" stroke="#444b5c"/><path d="M5.500 3.500h7l4 4v11h-11z" fill="#fff" stroke="#444b5c"/><path d="M12.500 3.500v4h4" fill="none" stroke="#444b5c"/></svg></button>
          <button type="button" aria-label="Move up"><svg viewBox="0 0 18 20"><path d="M5 16V7M2.500 8L5 5l2.500 3z" stroke="#999" stroke-width="2" fill="#999"/><path d="M17 2.500h-5v15h5M12 7.500h5M12 12.500h5" fill="none" stroke="#8fa0b8"/></svg></button>
          <button type="button" aria-label="Move down"><svg viewBox="0 0 18 20"><path d="M5 3v9M2.500 12L5 15l2.500-3z" stroke="#999" stroke-width="2" fill="#999"/><path d="M17 2.500h-5v15h5M12 7.500h5M12 12.500h5" fill="none" stroke="#8fa0b8"/></svg></button>
          <button type="button" class="apart" aria-label="Sort ascending"><svg viewBox="0 0 18 20"><path d="M3.500 8l2.500-6 2.500 6M4 6.500h4M4 11.500h4l-4 5h5" fill="none" stroke="#3b4f86" stroke-width="1.600"/><path d="M13.500 5v10M11.500 13l2 2 2-2" fill="none" stroke="#2d3550" stroke-width="1.600"/></svg></button>
          <button type="button" aria-label="Sort descending"><svg viewBox="0 0 18 20"><path d="M3.500 8l2.500-6 2.500 6M4 6.500h4M4 11.500h4l-4 5h5" fill="none" stroke="#3b4f86" stroke-width="1.600"/><path d="M13.500 14V4M11.500 6l2-2 2 2" fill="none" stroke="#2d3550" stroke-width="1.600"/></svg></button>
          <button type="button" class="btn wide">Manage Lookup Tables</button>
        </div>
        <div class="dfoot"><a href="#types">How do I manage family types?</a><button type="button" class="btn ok">OK</button><button type="button" class="btn">Cancel</button><button type="button" class="btn">Apply</button></div>
        <svg class="dsizer" viewBox="0 0 9 9"><path d="M6 0h2v2H6zM3 3h2v2H3zM6 3h2v2H6zM0 6h2v2H0zM3 6h2v2H3zM6 6h2v2H6z" fill="#bbb"/></svg>
      </form>
    </section>
  </main>

  <footer class="status">
    <span class="ready">Ready</span>
    <button aria-label="Select links"><svg viewBox="0 0 16 16"><path d="M6 6h4l2 4 1 4-3-1-1-3H6z"/><path d="M12 10l1 4h2" class="w"/><circle cx="4" cy="4.500" r="2.500" class="ring"/><circle cx="12" cy="4.500" r="2.500" class="ring"/><path d="M4 6h8v2H4z"/></svg></button>
    <button aria-label="Select underlay"><svg viewBox="0 0 16 16"><path d="M1 11L13 1v5l-2 2 2 5H3z"/><path d="M14 2v5l-2 2 2 4H3" class="w"/></svg></button>
    <button aria-label="Select pinned"><svg viewBox="0 0 16 16"><path d="M2 2h9v5l4 4v3h-4l-2-3-4 3H1l3-7H2z"/><path d="M12 8l3 3v3" class="w"/></svg></button>
    <button aria-label="Select by face"><svg viewBox="0 0 16 16"><path d="M1 4l2-1h11l-3 4v2l3 4H1z"/><path d="M14 4l-3 4 3 5-4 1" class="w"/></svg></button>
    <button aria-label="Drag on selection"><svg viewBox="0 0 16 16"><path d="M6 1v10M1 6h10" class="w"/><path d="M9 8l5 5-3 1zM5 2h1v8H5zM2 5h8v1H2z"/></svg></button>
    <button aria-label="Background processes"><svg viewBox="0 0 16 16"><circle cx="8" cy="8" r="5" class="spin"/></svg></button>
    <button class="flt"><svg viewBox="0 0 18 18"><path d="M1.500 2.500h15l-6 7v7h-3v-7z" fill="#e6ebf2" stroke="#444"/></svg>:0</button>
  </footer>
  <div class="taskbar"><svg viewBox="0 0 1920 8" preserveAspectRatio="none"><circle cx="37" cy="13" r="9" fill="#d78aa6"/><circle cx="1082" cy="14" r="11" fill="#3f8fc4"/><path d="M1229 4h40v4h-40z" fill="#333a42"/></svg></div>
</div>
</body>
</html>
```
FILE: styles.css
```css
* { box-sizing: border-box; }
html, body { height: 100%; margin: 0; }
body {
  font: 11px/15px "Open Sans", "Noto Sans", sans-serif;
  color: #1e1e1e;
  background: #ccc;
  overflow: hidden;
}
button, input, select { font: inherit; color: inherit; margin: 0; }
button { border: 0; padding: 0; background: none; }
h1, h2 { margin: 0; font-size: 11px; font-weight: 400; }
a { color: #0a5cad; }
svg { display: block; }
table { border-collapse: separate; border-spacing: 0; table-layout: fixed; width: 100%; }
.defs { position: absolute; width: 0; height: 0; }
.dots { fill: none; stroke: #999; stroke-dasharray: 1 1; }

.app { display: flex; flex-direction: column; height: 100vh; }

/* Title bar */
.titlebar { display: flex; height: 29px; background: #cbcbcb; }
.qat { display: flex; height: 24px; align-items: center; }
.q { width: 24px; height: 24px; }
.q.gap { margin-left: 5px; }
.q.small { width: 16px; }
.q.on { background: #b9d8f6; box-shadow: inset 0 0 0 1px #2a6fc0; }
.q svg { width: 100%; height: 24px; fill: none; stroke: #858585; }
.q .logo-r { font: 700 13px "Open Sans", sans-serif; fill: #fff; stroke: none; text-anchor: middle; }
.a { width: 12px; text-align: center; color: #333; font-size: 11px; }
.a.dim { color: #777; }
.s { width: 7px; height: 22px; background: linear-gradient(90deg, transparent 3px, #bbb 3px, #bbb 4px, transparent 4px); }
.app-title { flex: 1; text-align: center; line-height: 20px; color: #333; }
.account { width: 225px; height: 24px; }
.winctl { display: flex; width: 133px; height: 24px; justify-content: flex-end; gap: 1px; }
.winctl svg { width: 24px; height: 24px; }

/* Ribbon */
.tabs { display: flex; height: 20px; background: #cbcbcb; line-height: 19px; }
.tabs a { padding: 0 11px 0 10px; color: #222; text-decoration: none; }
.tabs .file { width: 45px; margin-right: 3px; padding: 0; text-align: center; background: #2a7ab0; color: #fff; }
.tabs .cur { padding: 0 9px; background: #eee; }
.collapse { margin-left: 20px; }
.collapse svg { width: 28px; height: 12px; }
.ribbon { display: flex; height: 96px; background: #eee; border-bottom: 1px solid #c4c4c4; }
.panel { display: flex; flex-direction: column; border-right: 1px solid #dcdcdc; padding-top: 4px; }
.panel h2 { margin-top: auto; height: 18px; margin-bottom: 1px; text-align: center; line-height: 17px; white-space: nowrap; }
.tools { display: grid; align-items: start; }
.rb { display: block; position: relative; width: 100%; color: #a3a3a3; text-align: center; white-space: nowrap; }
.rb svg { width: 32px; height: 32px; margin: 0 auto 5px; fill: none; stroke: #b0b0b0; }
.ribbon .f { fill: #e1e1e1; }
.ribbon .n { fill: #a8a8a8; stroke: none; }
.tri { font-size: 9px; color: #444; }
.rb.more::after { content: "▾"; position: absolute; right: 0; top: 44px; font-size: 9px; color: #666; }
.p-select { width: 57px; }
.p-props { width: 83px; }
.p-forms { width: 275px; }
.p-forms .tools { padding-left: 5px; grid-template-columns: 50px 42px 44px 44px 35px 53px; }
.p-model { width: 261px; }
.p-model .tools { padding-left: 3px; grid-template-columns: 40px 70px 42px 50px 54px; }
.p-control { width: 51px; }
.p-conn { width: 317px; }
.p-conn .tools { padding-left: 4px; grid-template-columns: 60px 64px 62px 62px 62px; }
.p-datum { width: 123px; }
.p-datum .tools { padding-left: 4px; grid-template-columns: 58px 58px; }
.p-plane { width: 124px; }
.p-plane .tools { padding-left: 1px; grid-template-columns: 40px 38px 42px; }
.p-family { width: 156px; border: 0; }
.p-family .tools { padding-left: 2px; grid-template-columns: 54px 100px; }
.p-family h2 { background: #c6c6e4; }
.quad { display: grid; grid-template-columns: 38px 38px; gap: 2px; padding-left: 3px; }
.quad button { height: 34px; display: grid; place-items: center; }
.quad .on { background: #bcd8f4; box-shadow: inset 0 0 0 1px #5a92cc; }
.quad svg { width: 31px; height: 31px; fill: none; stroke: #a5a5a5; }
.options { height: 27px; background: #eee; border-bottom: 2px solid #c8c8c8; }

/* Work area */
.work { flex: 1; display: flex; min-height: 0; }
.side { width: 219px; display: flex; flex-direction: column; background: #eee; }
.side h2 { padding-left: 3px; line-height: 23px; height: 21px; color: #444; white-space: nowrap; }
.typesel { display: flex; justify-content: space-between; align-items: center; height: 71px; margin: 0 2px; padding: 2px; border: 1px solid #ddd; background: linear-gradient(#efefef, #e2e2e2); }
.typesel svg { width: 66px; height: 66px; border: 1px solid #ddd; }
.typesel button { color: #888; }
.big-r { font: 700 32px "Open Sans", sans-serif; fill: #fff; text-anchor: middle; }
.filter { display: flex; height: 25px; padding: 1px 2px 2px; }
.selwrap { position: relative; }
.selwrap svg { position: absolute; right: 5px; top: 8px; width: 10px; height: 6px; pointer-events: none; }
.filter .selwrap { width: 132px; }
.selwrap select { width: 100%; height: 100%; appearance: none; padding: 0 3px; border: 1px solid #d5d5d5; border-radius: 2px; background: #fff; }
.edit { display: flex; align-items: center; gap: 4px; margin-left: 6px; color: #999; line-height: 18px; padding-bottom: 3px; }
.edit svg { width: 18px; height: 18px; }
.ptable { height: 272px; background: #fff; margin: 0 2px 0 1px; }
.ptable col.pk { width: 109px; }
.ptable td { height: 18px; padding: 0 0 0 8px; line-height: 16px; border-bottom: 1px dotted #666; white-space: nowrap; overflow: hidden; }
.ptable td + td { border-left: 1px dotted #666; border-right: 1px dotted #666; padding-left: 2px; }
.ptable .ro { color: #777; }
.grp th { position: relative; text-align: left; font-weight: 400; background: #dadada; height: 18px; padding: 0 0 0 2px; line-height: 16px; }
.grp th svg { position: absolute; right: 6px; top: 4px; width: 8px; height: 10px; }
td.fld, .ptable td + td.fld { padding: 0; }
.fld input { display: block; width: 100%; height: 17px; border: 1px solid #000; padding: 0 1px; background: #fff; }
input[type="checkbox"] { display: block; appearance: none; width: 13px; height: 13px; margin: 2px 0 0; border: 1px solid #777; border-radius: 3px; background: #f6f6f6; }
input[type="checkbox"]:checked { border-color: #0a5fb4; background: #0a5fb4; }
input[type="checkbox"]:checked::after { content: ""; display: block; width: 6px; height: 3px; margin: 3px 0 0 2px; border: solid #fff; border-width: 0 0 1px 1px; rotate: -45deg; }
.pfoot { display: flex; justify-content: space-between; height: 29px; padding: 4px 5px 6px 3px; line-height: 18px; }
.pfoot button { width: 71px; background: #f7f7f7; color: #999; border-radius: 2px; }
.props { border-bottom: 2px solid #c8c8c8; }
.browser { flex: 1; display: flex; flex-direction: column; }
.side .browser h2 { height: 20px; line-height: 20px; }
.tree { flex: 1; margin: 0 2px 0 1px; padding: 0; list-style: none; background: #fff; }
.tree li { display: flex; height: 18px; line-height: 15px; white-space: nowrap; }
.tree svg { width: 20px; height: 18px; flex: none; margin-left: -1px; margin-right: 1px; }
.tree svg.ic { width: 16px; height: 16px; margin: 1px 4px 0 0; }
.tree span { padding: 1px 3px 2px; }
.tree .kid { padding-left: 6px; }
.tree .sel { background: #dedede; }

.view { position: relative; flex: 1; display: flex; flex-direction: column; min-width: 0; border-left: 2px solid #c8c8c8; background: #eee; }
.viewtabs { display: flex; justify-content: space-between; height: 23px; background: #cbcbcb; border-bottom: 2px solid #fff; }
.vtab { display: flex; align-items: center; width: 128px; padding: 0 4px; background: #fff; color: #c2c2c2; font-weight: 600; }
.vtab > svg { width: 16px; height: 16px; margin-right: 8px; }
.vtab button { margin-left: auto; }
.vtab button svg { width: 12px; height: 12px; }
.vmore { width: 16px; margin-right: -3px; }
.vmore svg { width: 10px; height: 10px; }
.viewbody { flex: 1; display: flex; border-left: 2px solid #fff; }
.canvas { position: relative; flex: 1; overflow: hidden; background: linear-gradient(#f0f0f0, #d8d8d8 50%, #bebebe); border-right: 1px solid #fff; }
.machine { position: absolute; left: 136px; top: 55px; width: 440px; height: 660px; }
.cube { position: absolute; right: 16px; top: 18px; width: 88px; height: 94px; }
.face { font: 700 24px "Liberation Sans", Arial, sans-serif; fill: #8b8b8b; text-anchor: middle; }
.navbar { position: absolute; right: 0; top: 119px; width: 36px; height: 118px; border: 2px solid #b3b3b3; border-radius: 5px; background: #e6e6e6; }
.navbar svg { width: 32px; height: 114px; }
.vgrip { width: 16px; display: grid; place-items: center; }
.vgrip::before { content: ""; width: 2px; height: 16px; background: #555; }
.viewctl { display: flex; align-items: center; height: 19px; border-left: 2px solid #fff; border-bottom: 2px solid #fff; padding-left: 25px; }
.viewctl button { width: 21px; }
.viewctl .scale { width: 52px; padding-right: 17px; white-space: nowrap; }
.viewctl button svg { width: 20px; height: 16px; }
.hgrip { width: 16px; height: 2px; margin-left: 710px; background: #777; }
.sizer { width: 9px; height: 9px; margin: 5px 2px 0 auto; }

/* Family Types dialog */
.dialog { position: absolute; right: 178px; top: 26px; width: 619px; height: 708px; display: flex; flex-direction: column; padding: 0 11px; background: #f0f0f0; border: 1px solid #aab0b8; border-radius: 8px; box-shadow: 0 24px 50px rgba(0,0,0,.4), 0 2px 24px rgba(0,0,0,.25); font-size: 11px; }
.dhead { display: flex; justify-content: space-between; align-items: center; height: 29px; margin: 0 -11px; padding: 0 9px 0 8px; background: #eef3f8; border-radius: 8px 8px 0 0; }
.dhead svg { width: 11px; height: 11px; }
.dtype { display: flex; align-items: center; margin-top: 11px; height: 24px; }
.dtype label { width: 71px; margin-left: -1px; }
.dtype .selwrap { width: 431px; height: 19px; margin-right: 6px; }
.dtype select { background: #f8f8f8; border-color: #f4f4f4; }
.dtype button { width: 26px; height: 24px; margin-right: 4px; display: grid; place-items: center; }
.dtype button:last-child { margin: 0; }
.dtype .on { background: #e4f1fb; box-shadow: inset 0 0 0 1px #cfe5f7; }
.dtype button svg { width: 18px; height: 20px; }
.dsearch { display: flex; margin-top: 10px; height: 20px; background: #fff; border-bottom: 1px solid #888; }
.dsearch input { flex: 1; border: 0; padding: 0 2px; background: none; }
.dsearch input::placeholder { color: #777; opacity: 1; }
.dsearch svg { width: 17px; height: 17px; margin: 1px; }
.dtable { margin-top: 10px; border: solid #777; border-width: 1px 0 0 1px; padding-right: 1px; height: 517px; background: #fff; }
.c1 { width: 180px; } .c2 { width: 184px; } .c3 { width: 190px; }
.dtable thead th { height: 21px; padding: 0; font-weight: 400; background: #f0f0f0; border: solid #000; border-width: 0 1px 1px 0; }
.dtable td { height: 18px; padding: 0 0 0 2px; line-height: 16px; border: dotted #666; border-width: 0 1px 1px 0; }
.dtable .grp th { height: 22px; border-top: 3px solid transparent; background: #9ab3d0; background-clip: padding-box; font-weight: 700; color: #0c1a2c; }
.dtable .fill td { height: 226px; }
.dtools { display: flex; align-items: center; height: 22px; margin: 11px 0 0 1px; }
.dtools button { width: 30px; }
.dtools svg { width: 18px; height: 20px; }
.dtools .apart { margin-left: 13px; }
.btn { height: 22px; border: 1px solid #d0d0d0; border-radius: 4px; background: #fdfdfd; }
.dtools .btn.wide { width: 125px; margin-left: auto; }
.dfoot { display: flex; gap: 8px; margin-top: 14px; }
.dfoot a { margin: -2px auto 0 -1px; font-family: Roboto, sans-serif; }
.dfoot .btn { width: 76px; }
.dfoot .ok { border: 1px solid #1a78b8; box-shadow: inset 0 0 0 1px #cfe3f3; }
.dsizer { position: absolute; right: 1px; bottom: 1px; width: 9px; height: 9px; }

/* Status bar */
.status { display: flex; align-items: center; height: 25px; padding: 0 72px 0 1px; background: #cbcbcb; }
.ready { margin-right: auto; }
.status button { width: 26px; }
.status svg { width: 16px; height: 16px; margin: auto; fill: #a4a4a4; }
.status .w { fill: none; stroke: #eee; }
.status .ring { fill: none; stroke: #a4a4a4; stroke-width: 2; }
.status .spin { fill: none; stroke: #a4a4a4; stroke-width: 3; stroke-dasharray: 3 1; }
.status .flt { display: flex; align-items: center; width: 30px; }
.taskbar { height: 8px; background: linear-gradient(90deg, #12263f 0, #14283f 24%, #26241c 34%, #15202c 44%, #12263f 60%); }
.taskbar svg { width: 100%; height: 8px; }
```
